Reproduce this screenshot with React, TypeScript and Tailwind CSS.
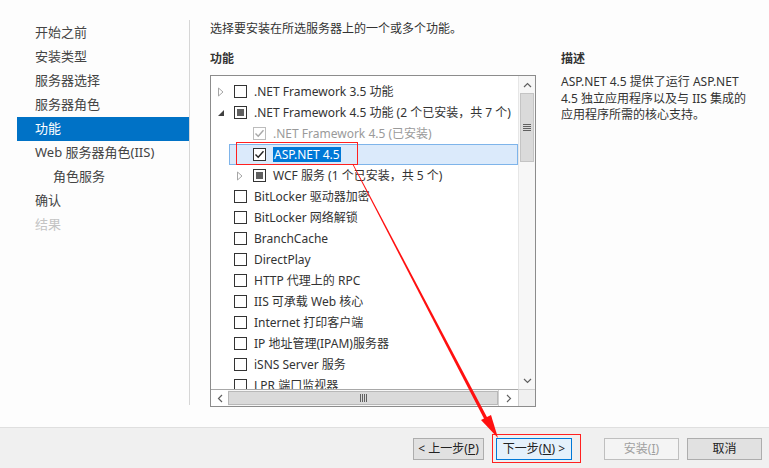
import React from "react";

const FONT = { fontFamily: '"Noto Sans", "Noto Sans CJK SC", sans-serif' };

function Check({ state, disabled }: { state: "none" | "checked" | "partial"; disabled?: boolean }) {
  const border = disabled ? "border-[#bcbcbc]" : "border-[#333333]";
  return (
    <div className={`w-[13px] h-[13px] border ${border} bg-white flex items-center justify-center shrink-0`}>
      {state === "partial" && <div className="w-[7px] h-[7px] bg-[#606060]" />}
      {state === "checked" && (
        <svg width="11" height="11" viewBox="0 0 11 11">
          <path d="M1.5 5.5 L4.2 8.2 L9.5 2.2" fill="none" stroke={disabled ? "#a8a8a8" : "#222"} strokeWidth="1.4" />
        </svg>
      )}
    </div>
  );
}

function Expander({ kind }: { kind: "closed" | "open" | "none" }) {
  return (
    <div className="w-[10px] h-[10px] flex items-center justify-center shrink-0">
      {kind === "closed" && (
        <svg width="8" height="10" viewBox="0 0 8 10">
          <path d="M1.5 1 L6 5 L1.5 9 Z" fill="none" stroke="#a6a6a6" strokeWidth="1" />
        </svg>
      )}
      {kind === "open" && (
        <svg width="8" height="8" viewBox="0 0 8 8">
          <path d="M7 1 L7 7 L1 7 Z" fill="#404040" />
        </svg>
      )}
    </div>
  );
}

type Row = {
  level: 0 | 1;
  exp: "closed" | "open" | "none";
  state: "none" | "checked" | "partial";
  text: string;
  disabled?: boolean;
  selected?: boolean;
};

const rows: Row[] = [
  { level: 0, exp: "closed", state: "none", text: ".NET Framework 3.5 功能" },
  { level: 0, exp: "open", state: "partial", text: ".NET Framework 4.5 功能 (2 个已安装，共 7 个)" },
  { level: 1, exp: "none", state: "checked", text: ".NET Framework 4.5 (已安装)", disabled: true },
  { level: 1, exp: "none", state: "checked", text: "ASP.NET 4.5", selected: true },
  { level: 1, exp: "closed", state: "partial", text: "WCF 服务 (1 个已安装，共 5 个)" },
  { level: 0, exp: "none", state: "none", text: "BitLocker 驱动器加密" },
  { level: 0, exp: "none", state: "none", text: "BitLocker 网络解锁" },
  { level: 0, exp: "none", state: "none", text: "BranchCache" },
  { level: 0, exp: "none", state: "none", text: "DirectPlay" },
  { level: 0, exp: "none", state: "none", text: "HTTP 代理上的 RPC" },
  { level: 0, exp: "none", state: "none", text: "IIS 可承载 Web 核心" },
  { level: 0, exp: "none", state: "none", text: "Internet 打印客户端" },
  { level: 0, exp: "none", state: "none", text: "IP 地址管理(IPAM)服务器" },
  { level: 0, exp: "none", state: "none", text: "iSNS Server 服务" },
  { level: 0, exp: "none", state: "none", text: "LPR 端口监视器" },
];

const nav = [
  { t: "开始之前" },
  { t: "安装类型" },
  { t: "服务器选择" },
  { t: "服务器角色" },
  { t: "功能", sel: true },
  { t: "Web 服务器角色(IIS)" },
  { t: "角色服务", indent: true },
  { t: "确认" },
  { t: "结果", dis: true },
];

function Grip({ vertical }: { vertical?: boolean }) {
  return vertical ? (
    <div className="flex flex-col gap-[1px]">
      <div className="w-[8px] h-[1px] bg-[#606060]" />
      <div className="w-[8px] h-[1px] bg-[#606060]" />
      <div className="w-[8px] h-[1px] bg-[#606060]" />
      <div className="w-[8px] h-[1px] bg-[#606060]" />
    </div>
  ) : (
    <div className="flex gap-[1px]">
      <div className="w-[1px] h-[8px] bg-[#606060]" />
      <div className="w-[1px] h-[8px] bg-[#606060]" />
      <div className="w-[1px] h-[8px] bg-[#606060]" />
      <div className="w-[1px] h-[8px] bg-[#606060]" />
    </div>
  );
}

export default function App() {
  return (
    <div className="relative w-[769px] h-[468px] bg-white flex flex-col overflow-hidden text-[#333333]" style={FONT}>
      <div className="flex h-[427px] bg-[#fdfdfd]">
        {/* nav */}
        <div className="w-[190px] shrink-0 pt-[21px] pl-[17px]">
          <div className="h-[385px] border-r border-[#d6d6d6] -mt-[1px] pt-[1px]">
            {nav.map((n, i) => (
              <div
                key={i}
                className={`h-[24px] flex items-center text-[13px] ${n.indent ? "pl-[36px]" : "pl-[18px]"} ${
                  n.sel ? "bg-[#0072c6] text-white" : n.dis ? "text-[#c4c4c4]" : "text-[#444444]"
                }`}
              >
                {n.t}
              </div>
            ))}
          </div>
        </div>
        {/* main */}
        <div className="flex-1 flex pl-[20px]">
          <div className="w-[326px] shrink-0 flex flex-col">
            <div className="h-[17px] mt-[20px] text-[12px] leading-[17px] text-[#333]">选择要安装在所选服务器上的一个或多个功能。</div>
            <div className="h-[17px] mt-[13px] text-[12px] leading-[17px] font-bold text-[#333]">功能</div>
            <div className="mt-[8px] w-[326px] h-[332px] border border-[#8c8c8c] grid grid-cols-[307px_17px] grid-rows-[313px_17px] bg-white">
              {/* list */}
              <div className="overflow-hidden pt-[5px]">
                {rows.map((r, i) => (
                  <div key={i} className="relative h-[21px] flex items-center">
                    {r.selected && (
                      <div className="absolute left-[18px] right-0 top-0 bottom-0 bg-[#dbeafb] border border-[#7eb4ea]" />
                    )}
                    <div className={`relative flex items-center ${r.level === 1 ? "pl-[24px]" : "pl-[5px]"}`}>
                      <Expander kind={r.exp} />
                      <div className="w-[8px]" />
                      <Check state={r.state} disabled={r.disabled} />
                      <div
                        className={`ml-[7px] text-[12px] leading-[15px] whitespace-nowrap ${
                          r.disabled ? "text-[#9a9a9a]" : "text-[#333]"
                        } ${r.selected ? "bg-[#0078d7] text-white px-[1px]" : ""}`}
                      >
                        {r.text}
                      </div>
                    </div>
                  </div>
                ))}
              </div>
              {/* vertical scrollbar */}
              <div className="bg-[#f7f7f7] border-l border-[#e6e6e6] flex flex-col">
                <div className="h-[17px] flex items-center justify-center">
                  <svg width="9" height="6" viewBox="0 0 9 6">
                    <path d="M1 5 L4.5 1.5 L8 5" fill="none" stroke="#606060" strokeWidth="1.2" />
                  </svg>
                </div>
                <div className="h-[69px] mx-[1px] bg-[#dadada] border border-[#c4c4c4] flex items-center justify-center">
                  <Grip vertical />
                </div>
                <div className="flex-1" />
                <div className="h-[17px] flex items-center justify-center">
                  <svg width="9" height="6" viewBox="0 0 9 6">
                    <path d="M1 1 L4.5 4.5 L8 1" fill="none" stroke="#606060" strokeWidth="1.2" />
                  </svg>
                </div>
              </div>
              {/* horizontal scrollbar */}
              <div className="bg-[#f7f7f7] border-t border-[#a8a8a8] flex">
                <div className="w-[17px] flex items-center justify-center bg-white">
                  <svg width="6" height="9" viewBox="0 0 6 9">
                    <path d="M5 1 L1.5 4.5 L5 8" fill="none" stroke="#606060" strokeWidth="1.2" />
                  </svg>
                </div>
                <div className="w-[270px] my-[1px] bg-[#dadada] border border-[#b8b8b8] flex items-center justify-center">
                  <Grip />
                </div>
                <div className="flex-1 flex items-center justify-center bg-white border-l border-[#d0d0d0]">
                  <svg width="6" height="9" viewBox="0 0 6 9">
                    <path d="M1 1 L4.5 4.5 L1 8" fill="none" stroke="#606060" strokeWidth="1.2" />
                  </svg>
                </div>
              </div>
              <div className="bg-[#f0f0f0] border-t border-l border-[#d0d0d0]" />
            </div>
          </div>
          {/* description */}
          <div className="pl-[25px] w-[208px]">
            <div className="h-[17px] mt-[50px] text-[12px] leading-[17px] font-bold text-[#333]">描述</div>
            <div className="mt-[7px] text-[12px] leading-[16.5px] text-[#333] w-[190px]">
              ASP.NET 4.5 提供了运行 ASP.NET 4.5 独立应用程序以及与 IIS 集成的应用程序所需的核心支持。
            </div>
          </div>
        </div>
      </div>
      {/* bottom bar */}
      <div className="flex-1 bg-[#f0f0f0] border-t border-[#dfdfdf] flex items-start pt-[10px] pl-[413px] text-[12px]">
        <button className="w-[71px] h-[22px] bg-[#e1e1e1] border border-[#adadad] flex items-center justify-center text-[#222]">
          &lt; 上一步(<span className="underline">P</span>)
        </button>
        <button className="ml-[12px] w-[76px] h-[22px] bg-[#e5f1fb] border border-[#0078d7] flex items-center justify-center text-[#222]">
          下一步(<span className="underline">N</span>) &gt;
        </button>
        <button className="ml-[32px] w-[75px] h-[22px] bg-[#f4f4f4] border border-[#bfbfbf] flex items-center justify-center text-[#a0a0a0]">
          安装(<span className="underline">I</span>)
        </button>
        <button className="ml-[8px] w-[75px] h-[22px] bg-[#e1e1e1] border border-[#adadad] flex items-center justify-center text-[#222]">
          取消
        </button>
      </div>

      {/* annotations */}
      <div className="absolute left-[236px] top-[142px] w-[122px] h-[23px] border border-[#ff2020]" />
      <div className="absolute left-[492px] top-[434px] w-[89px] h-[29px] border border-[#ff2020]" />
      <svg className="absolute left-0 top-0" width="769" height="468" viewBox="0 0 769 468">
        <polygon points="352.3,164 353.2,164 488.5,420 485.5,421.5" fill="#ff1010" />
        <polygon points="498,438 481,420 491,415" fill="#ff1010" />
      </svg>
    </div>
  );
}
